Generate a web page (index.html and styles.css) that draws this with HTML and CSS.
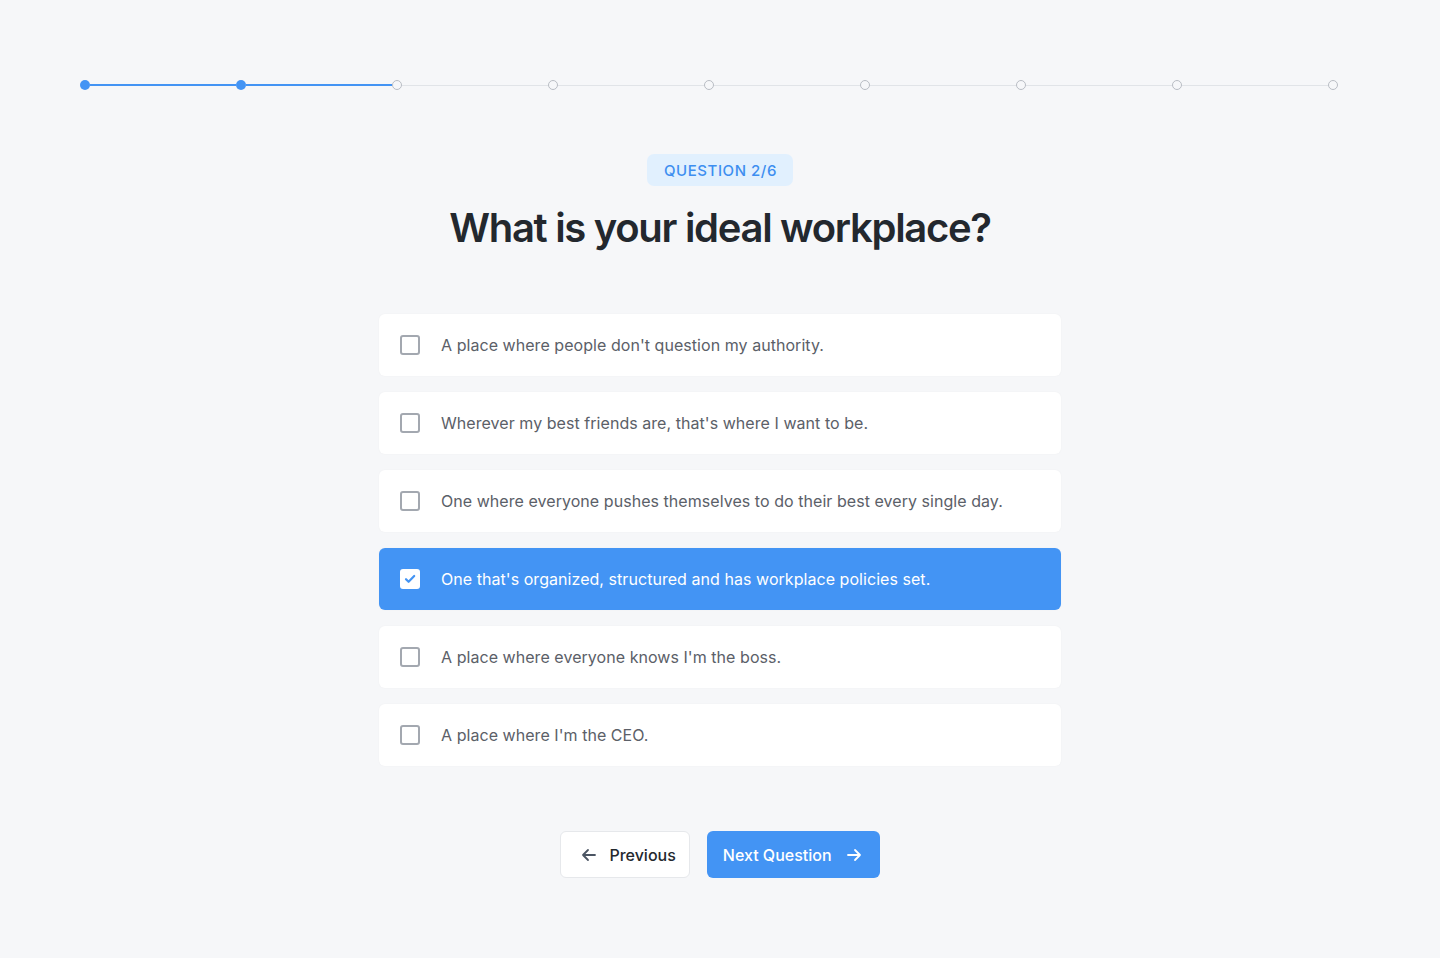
FILE: index.html
```html
<!DOCTYPE html>
<html lang="en">
<head>
<meta charset="utf-8">
<title>Quiz</title>
<link rel="stylesheet" href="styles.css">
</head>
<body>
<div class="page">
  <div class="stepper">
    <span class="dot done"></span><span class="line done"></span>
    <span class="dot done"></span><span class="line done"></span>
    <span class="dot"></span><span class="line"></span>
    <span class="dot"></span><span class="line"></span>
    <span class="dot"></span><span class="line"></span>
    <span class="dot"></span><span class="line"></span>
    <span class="dot"></span><span class="line"></span>
    <span class="dot"></span><span class="line"></span>
    <span class="dot"></span>
  </div>

  <div class="head">
    <span class="badge">QUESTION 2/6</span>
    <h1 class="title">What is your ideal workplace?</h1>
  </div>

  <ul class="options">
    <li class="option"><span class="box"></span><span class="label">A place where people don't question my authority.</span></li>
    <li class="option"><span class="box"></span><span class="label">Wherever my best friends are, that's where I want to be.</span></li>
    <li class="option"><span class="box"></span><span class="label">One where everyone pushes themselves to do their best every single day.</span></li>
    <li class="option selected"><span class="box"><svg viewBox="0 0 20 20" width="20" height="20"><path d="M6 10.2l2.6 2.6L14.2 7" fill="none" stroke="#4394f4" stroke-width="2.2" stroke-linecap="round" stroke-linejoin="round"/></svg></span><span class="label">One that's organized, structured and has workplace policies set.</span></li>
    <li class="option"><span class="box"></span><span class="label">A place where everyone knows I'm the boss.</span></li>
    <li class="option"><span class="box"></span><span class="label">A place where I'm the CEO.</span></li>
  </ul>

  <div class="actions">
    <button class="btn btn-prev"><svg viewBox="0 0 20 20" width="20" height="20"><path d="M16 10H4M9 5l-5 5 5 5" fill="none" stroke="#4b5563" stroke-width="1.8" stroke-linecap="round" stroke-linejoin="round"/></svg>Previous</button>
    <button class="btn btn-next">Next Question<svg viewBox="0 0 20 20" width="20" height="20"><path d="M4 10h12M11 5l5 5-5 5" fill="none" stroke="#ffffff" stroke-width="1.8" stroke-linecap="round" stroke-linejoin="round"/></svg></button>
  </div>
</div>
</body>
</html>
```

FILE: styles.css
```css
* { box-sizing: border-box; }
html, body { margin: 0; padding: 0; }
body {
  background: #f6f7f9;
  font-family: Inter, "Noto Sans", "Liberation Sans", sans-serif;
  color: #272b30;
}
.page {
  min-height: 958px;
  padding-top: 80px;
}
.stepper {
  display: flex;
  align-items: center;
  width: 1258px;
  margin-left: 80px;
  height: 10px;
}
.dot {
  flex: none;
  width: 10px;
  height: 10px;
  border-radius: 50%;
  border: 1px solid #b9bdc4;
  background: #f6f7f9;
}
.dot.done {
  border: none;
  background: #4394f4;
}
.line {
  flex: 1;
  height: 1px;
  background: #e1e4e8;
}
.line.done {
  height: 2px;
  background: #4394f4;
}
.head {
  display: flex;
  flex-direction: column;
  align-items: center;
  margin-top: 64px;
}
.badge {
  display: inline-flex;
  align-items: center;
  height: 32px;
  padding: 0 16px 0 17px;
  border-radius: 7px;
  background: #e1f0fe;
  color: #3d8ef0;
  font-size: 15px;
  font-weight: 500;
  letter-spacing: 0.55px;
}
.title {
  margin: 18px 0 0;
  font-size: 40px;
  line-height: 48px;
  font-weight: 600;
  letter-spacing: -1.3px;
  color: #23282e;
}
.options {
  list-style: none;
  margin: 62px auto 0;
  padding: 0;
  width: 682px;
  display: flex;
  flex-direction: column;
  gap: 16px;
}
.option {
  display: flex;
  align-items: center;
  gap: 21px;
  height: 62px;
  padding: 0 20px 0 21px;
  background: #ffffff;
  border-radius: 6px;
  box-shadow: 0 0 2px rgba(16, 24, 40, 0.04);
}
.box {
  flex: none;
  width: 20px;
  height: 20px;
  border: 2px solid #a3a8b0;
  border-radius: 3px;
  display: flex;
  align-items: center;
  justify-content: center;
}
.label {
  font-size: 16px;
  letter-spacing: 0.05px;
  color: #5b6068;
}
.option.selected {
  background: #4394f4;
}
.option.selected .box {
  background: #ffffff;
  border: none;
}
.option.selected .label {
  color: #ffffff;
}
.actions {
  display: flex;
  justify-content: center;
  gap: 17px;
  margin-top: 65px;
}
.btn {
  display: inline-flex;
  align-items: center;
  height: 47px;
  border-radius: 6px;
  font-family: inherit;
  font-size: 16px;
  font-weight: 500;
  cursor: pointer;
}
.btn-prev {
  gap: 10px;
  padding: 0 13px 0 18px;
  background: #ffffff;
  border: 1px solid #e6e8eb;
  color: #23282e;
}
.btn-next {
  gap: 12px;
  padding: 0 16px 0 16px;
  background: #4394f4;
  border: none;
  color: #ffffff;
}
```
